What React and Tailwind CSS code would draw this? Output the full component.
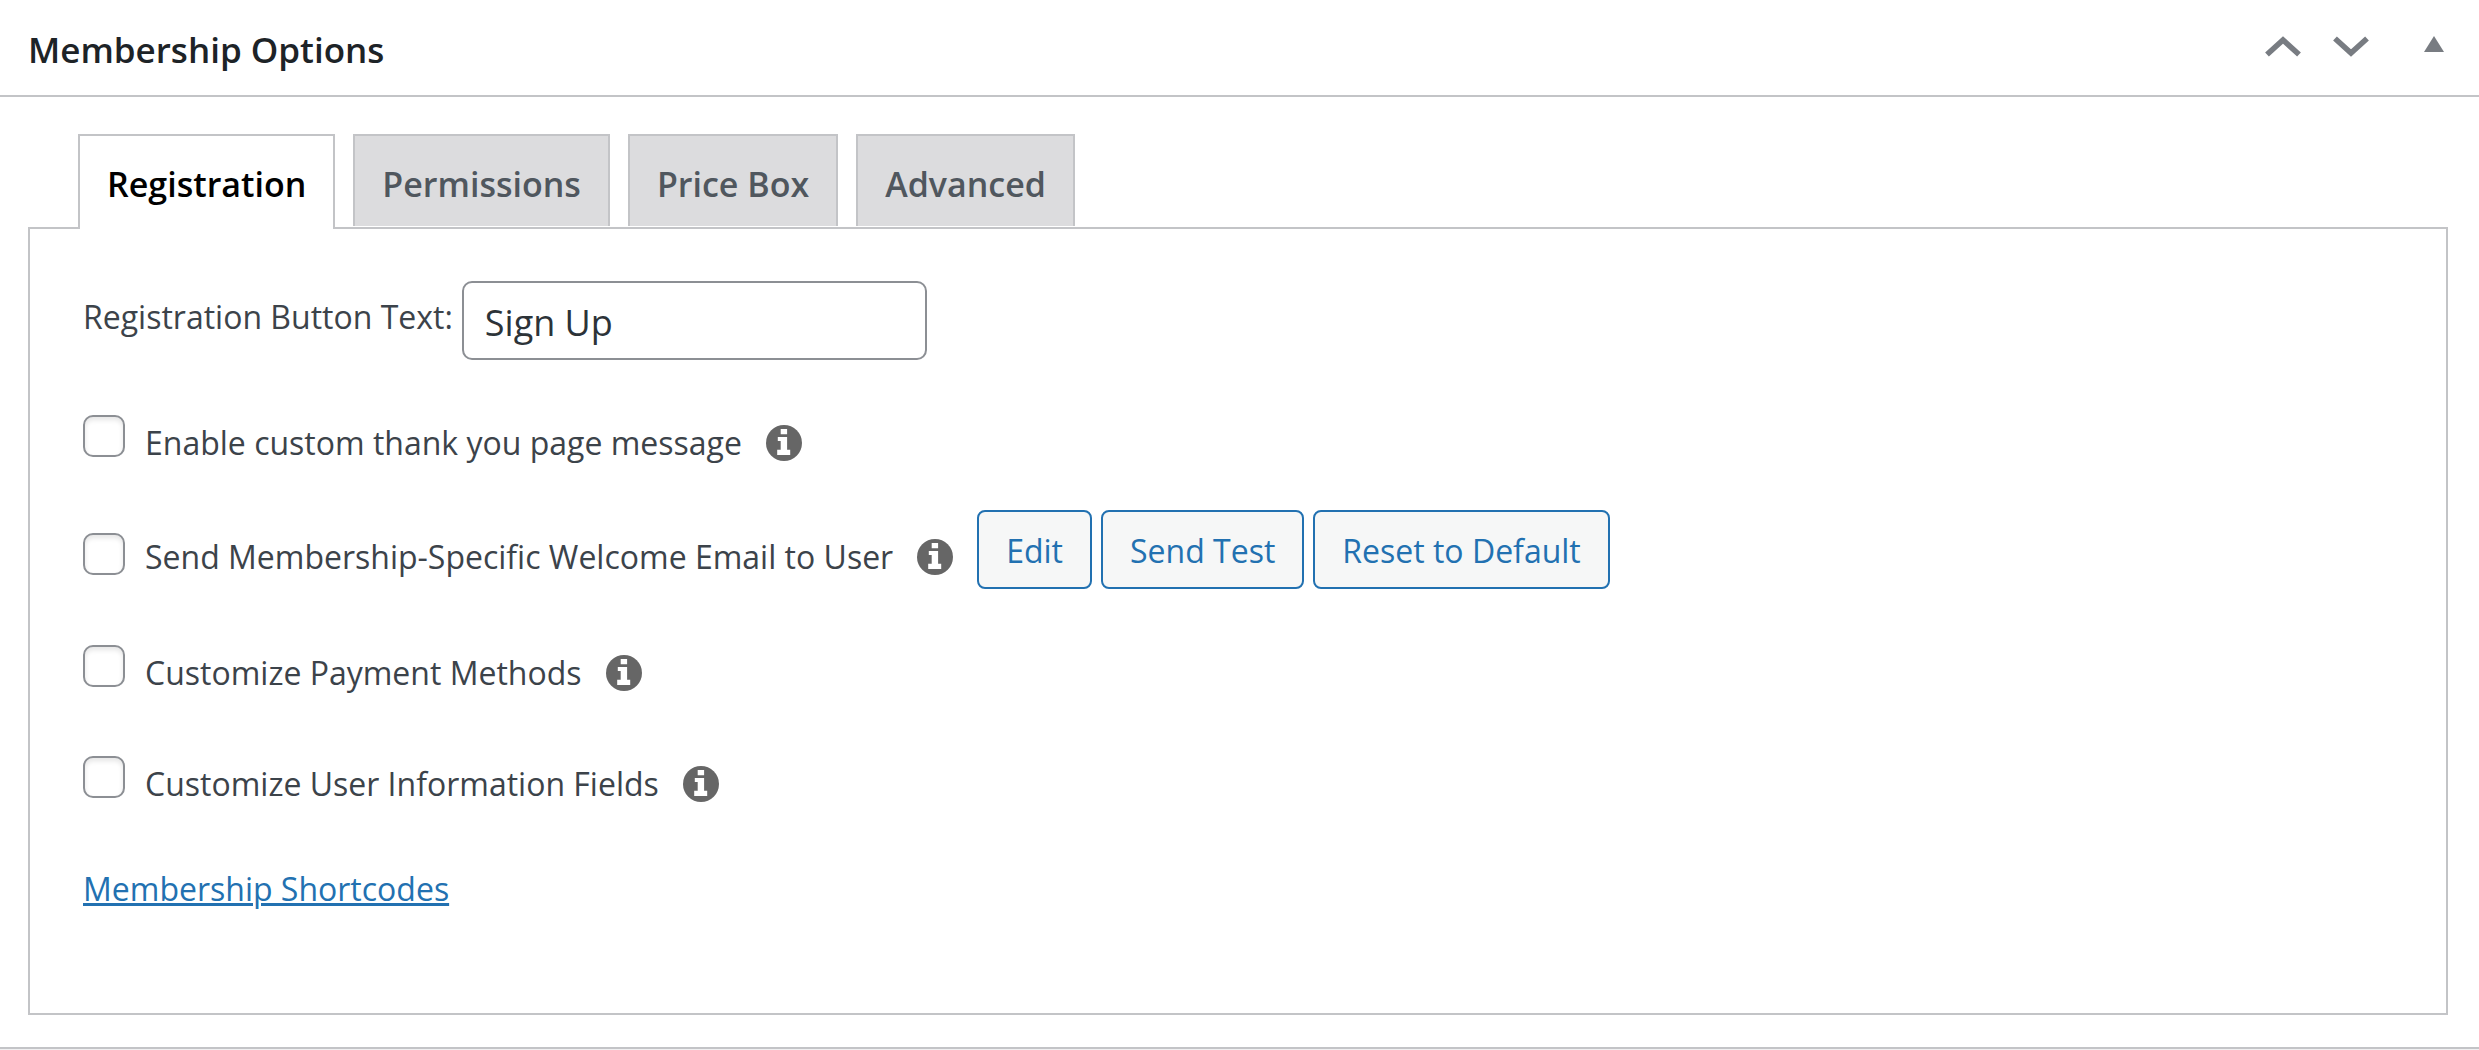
import { useState } from 'react';

const TABS = ['Registration', 'Permissions', 'Price Box', 'Advanced'];

function Chevron({ label, points }) {
  return (
    <button type="button" aria-label={label} className="text-[#787c82]">
      <svg viewBox="0 0 36 21" className="block h-[21px] w-9" fill="none" stroke="currentColor" strokeWidth="5.6">
        <polyline points={points} />
      </svg>
    </button>
  );
}

function InfoIcon() {
  return (
    <svg viewBox="0 0 36 36" className="mt-1.5 ml-6 size-9 shrink-0" aria-hidden="true">
      <circle cx="18" cy="18" r="18" fill="#666" />
      <path d="M14.7 4h6.4v5.2h-6.4zM11.8 12h9.3v12.8h3.1V30H11.2v-5.2h3.5V16h-2.9z" fill="#fff" />
    </svg>
  );
}

function Header() {
  return (
    <header className="flex items-start justify-between border-b-2 border-[#c3c4c7] pr-[35px] pl-7">
      <h2 className="pt-1 text-[35px] leading-[91px] font-semibold text-[#1d2327]">Membership Options</h2>
      <div className="flex items-start gap-8 pt-9">
        <Chevron label="Move up" points="2,18.5 18,4 34,18.5" />
        <Chevron label="Move down" points="2,2.5 18,17 34,2.5" />
        <button type="button" aria-label="Toggle panel" className="ml-[23px] text-[#787c82]">
          <svg viewBox="0 0 20 16" className="block h-4 w-5" fill="currentColor">
            <polygon points="10,0 20,16 0,16" />
          </svg>
        </button>
      </div>
    </header>
  );
}

function Option({ id, label, className, labelClass = 'pt-1' }) {
  return (
    <div className={`flex items-start ${className}`}>
      <input
        id={id}
        type="checkbox"
        className="size-[42px] shrink-0 appearance-none rounded-[10px] border-2 border-[#8c8f94] bg-white shadow-[inset_0_3px_5px_rgba(0,0,0,0.1)] checked:bg-[#2271b1]"
      />
      <div className={`ml-5 flex items-start ${labelClass}`}>
        <label htmlFor={id} className="leading-[48px]">{label}</label>
        <InfoIcon />
      </div>
    </div>
  );
}

function ActionButton({ children }) {
  return (
    <button
      type="button"
      className="h-[79px] rounded-lg border-2 border-[#2271b1] bg-[#f6f7f7] px-[27px] pt-[2px] text-[#2271b1]"
    >
      {children}
    </button>
  );
}

export default function App() {
  const [active, setActive] = useState('Registration');

  return (
    <main className="min-h-screen bg-[#f0f0f1] font-['Open_Sans','Noto_Sans',sans-serif] text-[32px] text-[#3c434a]">
      <section className="border-b-2 border-[#c3c4c7] bg-white">
        <Header />
        <div className="px-7 pt-[37px] pb-8">
          <div role="tablist" className="relative -mb-[2px] ml-[50px] flex items-start gap-[18px]">
            {TABS.map((tab) => (
              <button
                key={tab}
                type="button"
                role="tab"
                aria-selected={tab === active}
                onClick={() => setActive(tab)}
                className={`border-2 border-b-0 border-[#c3c4c7] px-[27px] pt-[6px] text-[34px] font-semibold ${
                  tab === active ? 'h-[95px] bg-white pb-[3px] text-black' : 'h-[92px] bg-[#dcdcde] text-[#50575e]'
                }`}
              >
                {tab}
              </button>
            ))}
          </div>

          <div role="tabpanel" className="mr-[3px] border-2 border-[#c3c4c7] px-[53px] pt-[52px] pb-[100px]">
            <div className="flex items-start">
              <label htmlFor="button-text" className="pt-3 leading-[48px]">Registration Button Text:</label>
              <input
                id="button-text"
                type="text"
                defaultValue="Sign Up"
                className="ml-[9px] h-[79px] w-[465px] rounded-[10px] border-2 border-[#8c8f94] bg-white px-[21px] pt-1 text-[36px] text-[#2c3338]"
              />
            </div>

            <Option id="thank-you" label="Enable custom thank you page message" className="mt-[55px]" />
            <div className="mt-[43px] flex items-start">
              <Option
                id="welcome-email"
                label="Send Membership-Specific Welcome Email to User"
                className="pt-[23px]"
                labelClass="pt-0"
              />
              <div className="ml-6 flex gap-[9px]">
                <ActionButton>Edit</ActionButton>
                <ActionButton>Send Test</ActionButton>
                <ActionButton>Reset to Default</ActionButton>
              </div>
            </div>
            <Option id="payment-methods" label="Customize Payment Methods" className="mt-14" />
            <Option id="user-fields" label="Customize User Information Fields" className="mt-[59px]" />

            <a href="#shortcodes" className="mt-[57px] block w-fit leading-[48px] text-[#2271b1] underline decoration-[3px]">
              Membership Shortcodes
            </a>
          </div>
        </div>
      </section>
    </main>
  );
}
